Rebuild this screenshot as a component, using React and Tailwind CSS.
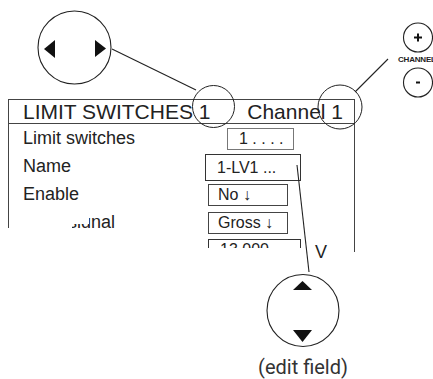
import React from "react";

export default function App() {
  return (
    <div className="relative w-[433px] h-[379px] bg-white overflow-hidden text-[#222]" style={{ fontFamily: '"Liberation Sans", Arial, sans-serif' }}>
      {/* Display panel */}
      <div className="absolute left-[8px] top-[99px] w-[347px] h-[159px] overflow-hidden border-l border-r border-t border-[#444]">
        <div className="h-[24px] border-b border-[#444] flex items-center justify-between pl-[14px] pr-[11px] text-[21px] leading-[22px]">
          <span>LIMIT SWITCHES 1</span>
          <span>Channel 1</span>
        </div>
        <div className="grid grid-cols-[196px_1fr] text-[18px] leading-[28px]">
          <div className="h-[28px] pl-[14px]">Limit switches</div>
          <div className="h-[28px]">
            <div className="mt-[4px] ml-[22px] w-[67px] h-[22px] border border-[#777] pl-[11px] text-[16px] leading-[20px]">1 . . . .</div>
          </div>
          <div className="h-[28px] pl-[14px]">Name</div>
          <div className="h-[28px]">
            <div className="mt-[2px] w-[96px] h-[27px] border border-[#333] pl-[11px] text-[16px] leading-[25px]">1-LV1 ...</div>
          </div>
          <div className="h-[28px] pl-[14px]">Enable</div>
          <div className="h-[28px]">
            <div className="mt-[4px] ml-[3px] w-[80px] h-[22px] border border-[#444] pl-[9px] text-[16px] leading-[20px]">No ↓</div>
          </div>
          <div className="h-[28px] pl-[14px]">Input signal</div>
          <div className="h-[28px]">
            <div className="mt-[4px] ml-[3px] w-[80px] h-[22px] border border-[#444] pl-[9px] text-[16px] leading-[20px]">Gross ↓</div>
          </div>
          <div className="h-[28px]" />
          <div className="h-[28px] flex">
            <div className="mt-[3px] ml-[3px] w-[93px] h-[22px] border border-[#333] pl-[11px] text-[16px] leading-[20px]">13.000</div>
            <div className="ml-[14px] mt-[2px]">V</div>
          </div>
        </div>
      </div>

      {/* white masks cropping the panel */}
      <div className="absolute left-[9px] top-[208px] w-[63px] h-[20px] bg-white" />
      <div className="absolute left-[72px] top-[208px] w-[17px] h-[16px] bg-white" />
      <div className="absolute left-0 top-[228px] w-[205px] h-[151px] bg-white" />
      <div className="absolute left-[205px] top-[248px] w-[107px] h-[131px] bg-white" />
      <div className="absolute left-[340px] top-[252px] w-[30px] h-[127px] bg-white" />

      {/* drawings */}
      <svg className="absolute left-0 top-0" width="433" height="379" viewBox="0 0 433 379" fill="none">
        <circle cx="74.5" cy="47.5" r="36.5" stroke="#222" strokeWidth="1.1" />
        <polygon points="44,49 55,40 55,58" fill="#111" />
        <polygon points="106,48.5 95,40 95,57" fill="#111" />
        <line x1="112" y1="49" x2="196" y2="90" stroke="#222" strokeWidth="1.1" />
        <circle cx="213.5" cy="106.5" r="21" stroke="#222" strokeWidth="1" />
        <circle cx="340" cy="107" r="22" stroke="#222" strokeWidth="1" />
        <line x1="355" y1="92" x2="388" y2="59" stroke="#222" strokeWidth="1.1" />
        <circle cx="418" cy="37.5" r="14.5" stroke="#222" strokeWidth="1.1" />
        <line x1="414" y1="37.5" x2="422" y2="37.5" stroke="#111" strokeWidth="2" />
        <line x1="418" y1="33.5" x2="418" y2="41.5" stroke="#111" strokeWidth="2" />
        <circle cx="418" cy="82.5" r="14.5" stroke="#222" strokeWidth="1.1" />
        <line x1="416" y1="82.5" x2="420" y2="82.5" stroke="#111" strokeWidth="2" />
        <line x1="297" y1="165" x2="309" y2="272" stroke="#222" strokeWidth="1.1" />
        <circle cx="303" cy="310.5" r="36" stroke="#222" strokeWidth="1.1" />
        <polygon points="293,290 312,290 302.5,281" fill="#111" />
        <polygon points="293,330 312,330 302.5,342" fill="#111" />
      </svg>

      <div className="absolute left-[398px] top-[56px] text-[8px] leading-[8px] font-bold whitespace-nowrap tracking-[-0.2px]">CHANNEL</div>
      <div className="absolute left-[243px] top-[356px] w-[120px] text-center text-[20px] leading-[22px] text-[#333]" style={{ fontFamily: 'Roboto, "Liberation Sans", sans-serif' }}>(edit field)</div>
    </div>
  );
}
